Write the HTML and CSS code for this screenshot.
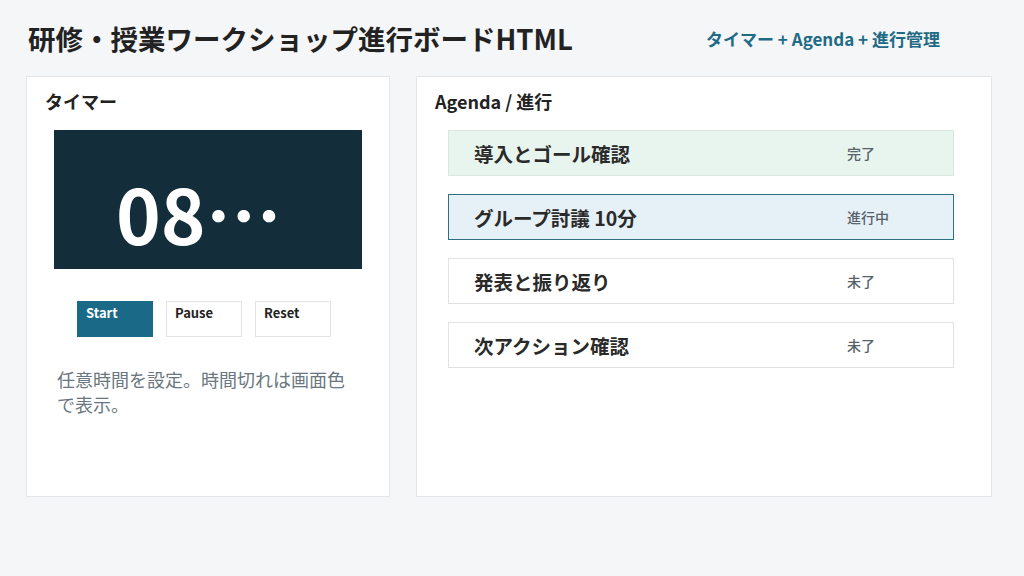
FILE: index.html
```html
<!DOCTYPE html>
<html lang="ja">
<head>
    <meta charset="UTF-8">
    <meta name="viewport" content="width=device-width, initial-scale=1.0">
    <title>研修・授業ワークショップ進行ボードHTML</title>
    <link rel="stylesheet" href="styles.css">
</head>
<body>
    <header class="page-header">
        <h1>研修・授業ワークショップ進行ボードHTML</h1>
        <div class="tagline">タイマー + Agenda + 進行管理</div>
    </header>

    <main class="board">
        <!-- タイマー -->
        <section class="card timer-card">
            <h2>タイマー</h2>
            <div class="timer-display">08:00</div>
            <div class="timer-controls">
                <button class="btn btn-primary">Start</button>
                <button class="btn">Pause</button>
                <button class="btn">Reset</button>
            </div>
            <p class="note">任意時間を設定。時間切れは画面色で表示。</p>
        </section>

        <!-- アジェンダ -->
        <section class="card agenda-card">
            <h2>Agenda / 進行</h2>
            <ul class="agenda-list">
                <li class="agenda-item done">
                    <span class="item-title">導入とゴール確認</span>
                    <span class="item-status">完了</span>
                </li>
                <li class="agenda-item active">
                    <span class="item-title">グループ討議 10分</span>
                    <span class="item-status">進行中</span>
                </li>
                <li class="agenda-item">
                    <span class="item-title">発表と振り返り</span>
                    <span class="item-status">未了</span>
                </li>
                <li class="agenda-item">
                    <span class="item-title">次アクション確認</span>
                    <span class="item-status">未了</span>
                </li>
            </ul>
        </section>
    </main>
</body>
</html>
```

FILE: styles.css
```css
body {
    font-family: "Noto Sans CJK JP", "Noto Sans", sans-serif;
    background-color: #f4f6f8;
    color: #222;
    margin: 0;
    padding: 0 32px 0 26px;
}

.page-header {
    display: flex;
    align-items: center;
    justify-content: space-between;
    height: 76px;
    padding: 0 52px 0 2px;
}

.page-header h1 {
    margin: 0;
    font-size: 27.5px;
    font-weight: 700;
    color: #222;
}

.tagline {
    font-size: 17px;
    font-weight: 700;
    color: #1f6b85;
}

.board {
    display: grid;
    grid-template-columns: 364px 1fr;
    gap: 26px;
    height: 421px;
}

.card {
    background: #fff;
    border: 1px solid #e3e7ea;
    padding: 12px 18px 18px;
}

.card h2 {
    margin: 0 0 17px;
    font-size: 18px;
    font-weight: 700;
    line-height: 24px;
    color: #222;
}

/* タイマー */
.timer-display {
    margin: 0 9px;
    height: 139px;
    box-sizing: border-box;
    padding: 27px 62px 0 62px;
    background: #132d3a;
    color: #fff;
    font-size: 76px;
    font-weight: 700;
    line-height: 110px;
    white-space: nowrap;
    overflow: hidden;
    text-overflow: ellipsis;
}

.timer-controls {
    display: flex;
    gap: 13px;
    margin: 32px 0 0 32px;
}

.btn {
    display: flex;
    align-items: flex-start;
    width: 76px;
    height: 36px;
    padding: 1px 8px;
    background: #fff;
    border: 1px solid #e1e4e6;
    border-radius: 0;
    font-family: inherit;
    font-size: 13px;
    font-weight: 700;
    color: #222;
    cursor: pointer;
}

.btn-primary {
    background: #1a6a87;
    border-color: #1a6a87;
    color: #fff;
}

.note {
    margin: 30px 12px 0;
    font-size: 18px;
    line-height: 25px;
    color: #6b7780;
}

/* アジェンダ */
.agenda-list {
    list-style: none;
    margin: 1px 0 0;
    padding: 0 19px 0 13px;
}

.agenda-item {
    display: grid;
    grid-template-columns: 1fr 80px;
    align-items: center;
    height: 46px;
    box-sizing: border-box;
    padding: 0 26px 0 25px;
    margin-bottom: 18px;
    border: 1px solid #dfe3e6;
    background: #fff;
}

.agenda-item.done {
    background: #e8f4ee;
    border-color: #d9e7e0;
}

.agenda-item.active {
    background: #e6f1f7;
    border-color: #2f6f86;
}

.item-title {
    font-size: 19.5px;
    font-weight: 700;
    color: #2a2a2a;
}

.item-status {
    font-size: 14px;
    font-weight: 500;
    color: #56616a;
}
```
